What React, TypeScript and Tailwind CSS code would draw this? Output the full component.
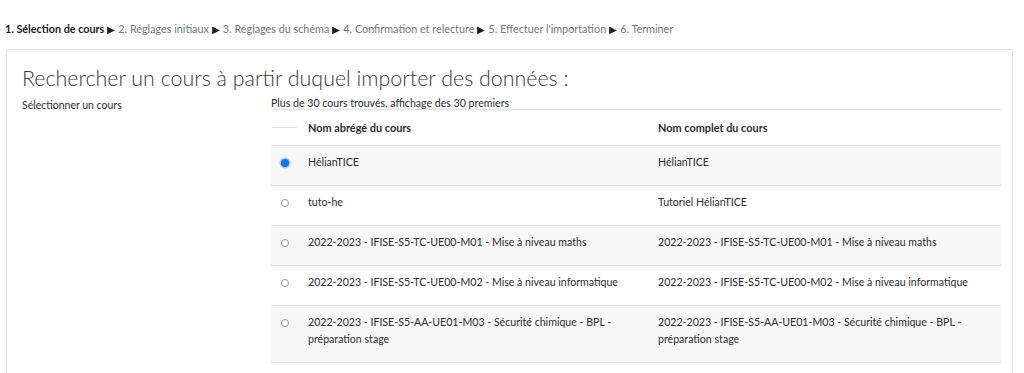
import React from "react";

const rows: { short: string; full: string; checked?: boolean }[] = [
  { short: "HélianTICE", full: "HélianTICE", checked: true },
  { short: "tuto-he", full: "Tutoriel HélianTICE" },
  {
    short: "2022-2023 - IFISE-S5-TC-UE00-M01 - Mise à niveau maths",
    full: "2022-2023 - IFISE-S5-TC-UE00-M01 - Mise à niveau maths",
  },
  {
    short: "2022-2023 - IFISE-S5-TC-UE00-M02 - Mise à niveau informatique",
    full: "2022-2023 - IFISE-S5-TC-UE00-M02 - Mise à niveau informatique",
  },
  {
    short: "2022-2023 - IFISE-S5-AA-UE01-M03 - Sécurité chimique - BPL - préparation stage",
    full: "2022-2023 - IFISE-S5-AA-UE01-M03 - Sécurité chimique - BPL - préparation stage",
  },
];

function Radio({ checked }: { checked?: boolean }) {
  if (checked) {
    return (
      <span className="inline-block align-middle w-[8px] h-[8px] rounded-full bg-[#1a73e8] ring-[1.5px] ring-[#a9ccf7]" />
    );
  }
  return (
    <span className="inline-block align-middle w-[8px] h-[8px] rounded-full border border-[#9a9a9a] bg-white" />
  );
}

export default function App() {
  const steps = [
    "2. Réglages initiaux",
    "3. Réglages du schéma",
    "4. Confirmation et relecture",
    "5. Effectuer l'importation",
    "6. Terminer",
  ];
  return (
    <div className="font-['Lato','Noto_Sans',sans-serif] bg-white w-[1024px] h-[373px] overflow-hidden text-[#2a2e33]">
      <nav className="pt-[22px] pl-[5px] text-[10.8px] leading-[13px] text-[#70777e] whitespace-nowrap">
        <span className="font-bold text-[#1d2125]">1. Sélection de cours</span>
        {steps.map((s) => (
          <span key={s}>
            <span className="text-[#1d2125] text-[9.5px] mx-[3px]">▶</span>
            {s}
          </span>
        ))}
      </nav>
      <div className="mt-[13px] ml-[6px] mr-[11px] border border-[#e3e3e3] rounded-[3px] pl-[15px] pr-[12px] pt-[15px] h-[400px]">
        <h2 className="text-[21.4px] leading-[26px] font-light text-[#3a3a3a]">
          Rechercher un cours à partir duquel importer des données :
        </h2>
        <div className="flex mt-[6px] text-[10.6px]">
          <div className="w-[249px] shrink-0 text-[10.5px] leading-[16px]">Sélectionner un cours</div>
          <div className="flex-1">
            <div className="leading-[12px] text-[10.6px]">Plus de 30 cours trouvés, affichage des 30 premiers</div>
            <table className="w-[730px] border-collapse leading-[17px]">
              <thead>
                <tr className="border-t border-[#dee2e6]">
                  <th className="w-[27px] h-[36px] align-middle p-0">
                    <div className="w-[25px] h-px bg-[#e2e2e2] mx-auto" />
                  </th>
                  <th className="w-[350px] text-left pl-[10px] font-bold text-[10.9px]">Nom abrégé du cours</th>
                  <th className="text-left pl-[10px] font-bold text-[10.9px]">Nom complet du cours</th>
                </tr>
              </thead>
              <tbody>
                {rows.map((r, i) => (
                  <tr
                    key={i}
                    className={`border-t border-[#dee2e6] ${i % 2 === 0 ? "bg-[#f7f7f7]" : "bg-white"} ${i === rows.length - 1 ? "border-b" : ""}`}
                  >
                    <td className="align-top text-center pt-[8px] pb-[14px]">
                      <Radio checked={r.checked} />
                    </td>
                    <td className="align-top pl-[10px] pr-[10px] pt-[8px] pb-[14px]">{r.short}</td>
                    <td className="align-top pl-[10px] pr-[10px] pt-[8px] pb-[14px]">{r.full}</td>
                  </tr>
                ))}
              </tbody>
            </table>
          </div>
        </div>
      </div>
    </div>
  );
}
